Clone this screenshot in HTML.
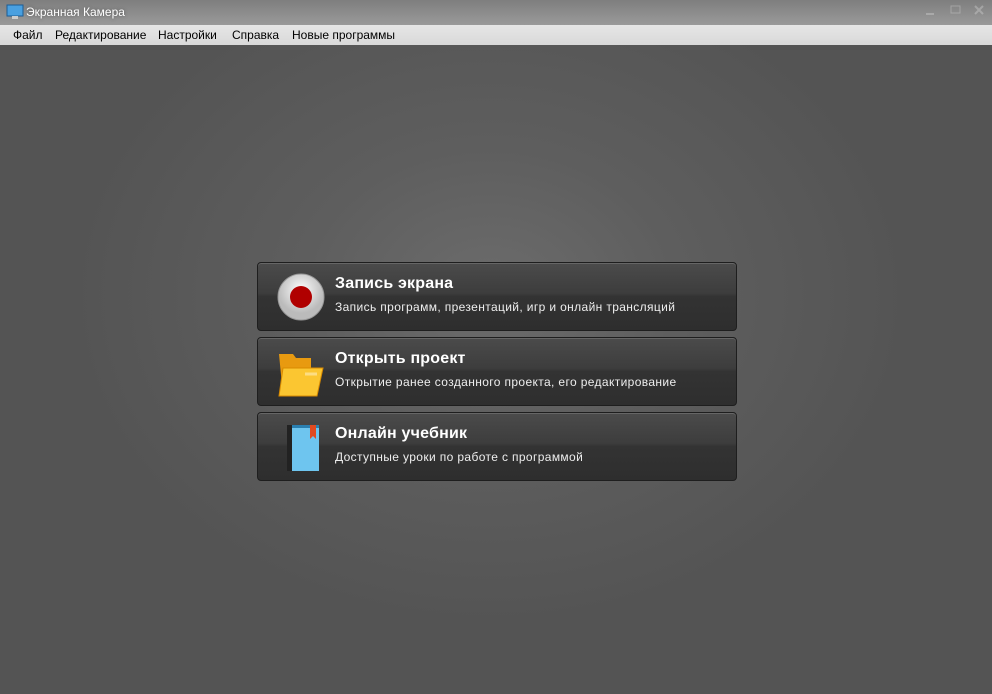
<!DOCTYPE html>
<html><head><meta charset="utf-8"><style>
*{margin:0;padding:0;box-sizing:border-box}
body{width:992px;height:694px;overflow:hidden;font-family:"Liberation Sans","DejaVu Sans",sans-serif;background:#555}
.title{position:absolute;left:0;top:0;width:992px;height:25px;background:linear-gradient(#7e7e7e,#9a9a9a);color:#fff;font-size:12px}
.title span{position:absolute;left:26px;top:5px;text-shadow:0 0 3px #555}
.menu{position:absolute;left:0;top:25px;width:992px;height:20px;background:linear-gradient(#e6e6e6,#d9d9d9);font-size:12px;color:#000}
.menu span{position:absolute;top:3px}
.main{position:absolute;left:0;top:45px;width:992px;height:649px;background:radial-gradient(ellipse 420px 330px at 490px 250px,#6c6c6c 0%,#5e5e5e 45%,#545454 100%)}
.btn{position:absolute;left:257px;width:480px;height:69px;border:1px solid #1e1e1e;border-radius:4px;background:linear-gradient(#4b4b4b 0%,#3d3d3d 45%,#333 50%,#2e2e2e 100%);box-shadow:inset 0 1px 0 #666}
.btn b{position:absolute;left:77px;top:12px;color:#fff;font-size:16px;letter-spacing:.2px}
.btn i{position:absolute;left:77px;top:37px;color:#eee;font-size:12px;font-style:normal;letter-spacing:.37px}
.btn svg{position:absolute}
</style></head><body>
<div class="title"><svg width="18" height="16" style="position:absolute;left:6px;top:4px"><rect x="1" y="1" width="16" height="11" fill="#4aa0e0" stroke="#1b5c95"/><rect x="6" y="12" width="6" height="3" fill="#ccc"/></svg><span>Экранная Камера</span>
<svg width="80" height="20" style="position:absolute;left:912px;top:2px" opacity=".35"><rect x="14" y="11" width="8" height="2" fill="#ddd"/><rect x="39" y="4" width="9" height="7" fill="none" stroke="#ddd"/><path d="M63 4l8 8M71 4l-8 8" stroke="#ddd" stroke-width="2"/></svg></div>
<div class="menu"><span style="left:13px">Файл</span><span style="left:55px">Редактирование</span><span style="left:158px">Настройки</span><span style="left:232px">Справка</span><span style="left:292px">Новые программы</span></div>
<div class="main"></div>
<div class="btn" style="top:262px"><svg width="48" height="48" style="left:19px;top:10px"><defs><radialGradient id="g1" cx=".5" cy=".35"><stop offset="0" stop-color="#fff"/><stop offset="1" stop-color="#bbb"/></radialGradient></defs><circle cx="24" cy="24" r="23" fill="url(#g1)" stroke="#999"/><circle cx="24" cy="24" r="11" fill="#b00000"/></svg><b>Запись экрана</b><i>Запись программ, презентаций, игр и онлайн трансляций</i></div>
<div class="btn" style="top:337px"><svg width="52" height="52" style="left:17px;top:10px"><path d="M4 6h14l3 4h15v38H8z" fill="#e89a10"/><path d="M8 20h40l-6 28H4z" fill="#fbc631" stroke="#d88a00"/><path d="M30 26h12" stroke="#fff6" stroke-width="3"/></svg><b>Открыть проект</b><i>Открытие ранее созданного проекта, его редактирование</i></div>
<div class="btn" style="top:412px"><svg width="40" height="52" style="left:25px;top:8px"><rect x="4" y="4" width="7" height="46" fill="#222"/><rect x="9" y="4" width="27" height="46" fill="#6ec5ef"/><rect x="9" y="4" width="27" height="3" fill="#2a7fb0"/><path d="M27 4v14l3-3 3 3V4z" fill="#e04a20"/></svg><b>Онлайн учебник</b><i>Доступные уроки по работе с программой</i></div>
</body></html>
